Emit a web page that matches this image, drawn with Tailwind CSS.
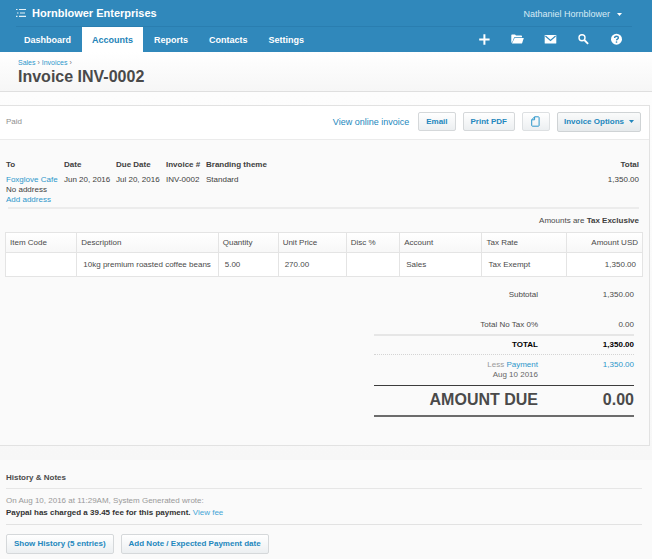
<!DOCTYPE html>
<html lang="en">
<head>
<meta charset="utf-8">
<meta name="viewport" content="width=device-width, initial-scale=1">
<title>Invoice INV-0002</title>
<script src="https://cdn.jsdelivr.net/npm/@tailwindcss/browser@4"></script>
</head>
<body class="min-h-screen bg-[#fafafa] font-['Liberation_Sans',Arial,sans-serif] text-[8px] leading-[10px] text-[#4a4a4a]">

<header class="bg-[#3088bb] text-white">
  <div class="ml-4 mr-5 flex h-[27px] items-center justify-between border-b border-[#2a7eb0]">
    <div class="flex items-center gap-[6px]">
      <svg class="h-[10px] w-[10px]" viewBox="0 0 10 10" fill="#e4f1f8" aria-hidden="true"><path d="M0 1h1.5v1.1H0zM3 1h7v1.1H3zM1 4.4h1.5v1.1H1zM4 4.4h5v1.1H4zM0 7.8h1.5v1.1H0zM3 7.8h7v1.1H3z"/></svg>
      <span class="text-[11px] leading-[14px] font-bold">Hornblower Enterprises</span>
    </div>
    <button type="button" class="mr-[10px] flex items-center gap-[7px] pt-[2px] text-[9px] leading-[12px] text-[#d9ebf5]">Nathaniel Hornblower
      <svg class="h-[3px] w-[5px]" viewBox="0 0 5 3" fill="#fff" aria-hidden="true"><path d="M0 0h5L2.5 3z"/></svg>
    </button>
  </div>
  <div class="flex h-[25px] items-stretch justify-between pl-[14px] pr-[29px]">
    <nav class="flex gap-px text-[9px] leading-[12px] font-bold">
      <a href="#" class="flex items-center px-[10px]">Dashboard</a>
      <a href="#" class="flex items-center bg-white px-[10px] text-[#2383b8]">Accounts</a>
      <a href="#" class="flex items-center px-[10px]">Reports</a>
      <a href="#" class="flex items-center px-[10px]">Contacts</a>
      <a href="#" class="flex items-center px-[10px]">Settings</a>
    </nav>
    <div class="flex items-center gap-[20px]">
      <button type="button" aria-label="New"><svg class="h-[13px] w-[13px]" viewBox="0 0 13 13" fill="#fff"><path d="M5.4 1.3h2v4.2h4.2v2H7.4v4.2h-2V7.5H1.2v-2h4.2z"/></svg></button>
      <button type="button" aria-label="Files"><svg class="h-[13px] w-[13px]" viewBox="0 0 13 13" fill="#fff"><path d="M.3 2.2q0-.7.7-.7h3l1 1h5.2q.8 0 .8.8v1H3.2L1.5 8.6.3 10z"/><path d="M3.6 5h9.2l-1.6 5q-.2.6-.9.6H.9z"/></svg></button>
      <button type="button" aria-label="Messages"><svg class="h-[13px] w-[13px]" viewBox="0 0 13 13"><rect x=".7" y="1.9" width="11.6" height="8.6" rx=".6" fill="#fff"/><path d="M1.4 3l5.1 4.4L11.6 3" fill="none" stroke="#3088bb" stroke-width="1.1"/></svg></button>
      <button type="button" aria-label="Search"><svg class="h-[13px] w-[13px]" viewBox="0 0 13 13" fill="none" stroke="#fff"><circle cx="5" cy="4.8" r="3" stroke-width="1.4"/><path d="M7.3 7l3.8 3.8" stroke-width="1.8"/></svg></button>
      <button type="button" aria-label="Help"><svg class="h-[13px] w-[13px]" viewBox="0 0 13 13"><circle cx="6.5" cy="6.2" r="5.5" fill="#fff"/><path d="M4.6 5q0-1.8 1.9-1.8T8.4 4.8q0 .8-.9 1.3t-1 1.3" fill="none" stroke="#3088bb" stroke-width="1.4"/><circle cx="6.5" cy="9" r=".85" fill="#3088bb"/></svg></button>
    </div>
  </div>
</header>

<div class="border-b border-[#dfdfdf] bg-linear-to-b from-white to-[#f6f6f6] px-[18px] pt-[6px] pb-[5px]">
  <nav class="text-[7px] leading-[9px] text-[#777]"><a href="#" class="text-[#2d97cb]">Sales</a> › <a href="#" class="text-[#2d97cb]">Invoices</a> ›</nav>
  <h1 class="text-[16px] leading-[19px] font-bold text-[#4a4a4a]">Invoice INV-0002</h1>
</div>

<main>
  <div class="bg-linear-to-b from-[#fdfdfd] to-[#f7f7f7] pt-[13px] pr-[2px] pb-[14px]">
    <section class="border-y border-r border-[#e2e2e2] bg-[#fafafa] pb-[28px]">
      <div class="flex h-[34px] items-center justify-between border-b border-[#ebebeb] bg-white pr-[8px] pb-[2px] pl-[6px]">
        <span class="text-[#8f8f8f]">Paid</span>
        <div class="flex items-center font-bold text-[#2387bd]">
          <a href="#" class="mr-[9px] text-[9px] font-normal">View online invoice</a>
          <button type="button" class="mr-[7px] h-[19px] rounded-[2px] border border-[#d5d8da] bg-linear-to-b from-white to-[#eceff1] px-[7px] font-bold">Email</button>
          <button type="button" class="mr-[7px] h-[19px] rounded-[2px] border border-[#d5d8da] bg-linear-to-b from-white to-[#eceff1] px-[7px] font-bold">Print PDF</button>
          <button type="button" aria-label="Copy" class="mr-[7px] flex h-[19px] w-[28px] items-center justify-center rounded-[2px] border border-[#dde0e2] bg-linear-to-b from-white to-[#eceff1]"><svg class="h-[11px] w-[9px]" viewBox="0 0 9 11" fill="none" stroke="#2d97cb" stroke-width="1"><path d="M3.6.8h3.8q.7 0 .7.7v8q0 .7-.7.7H1.4q-.7 0-.7-.7V3.8zM3.6.8v3H.8"/></svg></button>
          <button type="button" class="flex h-[20px] items-center gap-[5px] rounded-[2px] border border-[#cfd3d5] bg-linear-to-b from-[#fafbfb] to-[#e6eaec] px-[6px] font-bold">Invoice Options<svg class="h-[3px] w-[5px]" viewBox="0 0 5 3" fill="currentColor" aria-hidden="true"><path d="M0 0h5L2.5 3z"/></svg></button>
        </div>
      </div>

      <div class="pt-[20px] pr-[10px] pl-[6px]">
        <table class="w-full text-left align-top text-[#404040]">
          <thead>
            <tr>
              <th class="w-[58px]">To</th><th class="w-[52px]">Date</th><th class="w-[50px]">Due Date</th><th class="w-[40px]">Invoice #</th><th>Branding theme</th><th class="text-right">Total</th>
            </tr>
          </thead>
          <tbody>
            <tr class="align-top whitespace-nowrap">
              <td class="pt-[5px]"><a href="#" class="text-[#2d97cb]">Foxglove Cafe</a><br>No address<br><a href="#" class="text-[#2d97cb]">Add address</a></td>
              <td class="pt-[5px]">Jun 20, 2016</td><td class="pt-[5px]">Jul 20, 2016</td><td class="pt-[5px]">INV-0002</td><td class="pt-[5px]">Standard</td><td class="pt-[5px] text-right">1,350.00</td>
            </tr>
          </tbody>
        </table>
      </div>
      <div class="mt-[2px] mr-[10px] ml-[8px] border-t-2 border-[#ececec] pt-[7px] text-right">Amounts are <strong class="text-[#404040]">Tax Exclusive</strong></div>

      <div class="mt-[6px] pr-[6px] pl-[5px]">
        <table class="w-full table-fixed border-collapse border border-[#e0e0e0] text-left">
          <thead>
            <tr class="h-[20px] bg-linear-to-b from-white to-[#f7f7f7]">
              <th class="w-[11.2%] border border-[#e4e4e4] px-[4px] font-normal">Item Code</th>
              <th class="w-[22.2%] border border-[#e4e4e4] px-[4px] font-normal">Description</th>
              <th class="w-[9.4%] border border-[#e4e4e4] px-[4px] font-normal">Quantity</th>
              <th class="w-[10.7%] border border-[#e4e4e4] px-[4px] font-normal">Unit Price</th>
              <th class="w-[8.4%] border border-[#e4e4e4] px-[4px] font-normal">Disc %</th>
              <th class="w-[12.9%] border border-[#e4e4e4] px-[4px] font-normal">Account</th>
              <th class="w-[13.3%] border border-[#e4e4e4] px-[4px] font-normal">Tax Rate</th>
              <th class="border border-[#e4e4e4] px-[4px] text-right font-normal">Amount USD</th>
            </tr>
          </thead>
          <tbody>
            <tr class="h-[24px] bg-white whitespace-nowrap">
              <td class="border border-[#e4e4e4]"></td>
              <td class="border border-[#e4e4e4] px-[6px]">10kg premium roasted coffee beans</td>
              <td class="border border-[#e4e4e4] px-[6px]">5.00</td>
              <td class="border border-[#e4e4e4] px-[6px]">270.00</td>
              <td class="border border-[#e4e4e4]"></td>
              <td class="border border-[#e4e4e4] px-[6px]">Sales</td>
              <td class="border border-[#e4e4e4] px-[6px]">Tax Exempt</td>
              <td class="border border-[#e4e4e4] px-[6px] text-right">1,350.00</td>
            </tr>
          </tbody>
        </table>
      </div>

      <dl class="mt-[13px] mr-[15px] ml-auto w-[40%] min-w-[260px] text-right">
        <div class="flex justify-end"><dt>Subtotal</dt><dd class="w-[96px]">1,350.00</dd></div>
        <div class="mt-[20px] flex justify-end border-b-2 border-[#e6e6e6] pb-[4px]"><dt>Total No Tax 0%</dt><dd class="w-[96px]">0.00</dd></div>
        <div class="flex justify-end border-b border-dotted border-[#d4d4d4] py-[4px] font-bold text-black"><dt>TOTAL</dt><dd class="w-[96px]">1,350.00</dd></div>
        <div class="flex justify-end border-b border-[#3c3c3c] py-[5px]"><dt><span class="text-[#999]">Less</span> <a href="#" class="text-[#2d97cb]">Payment</a><br><span class="text-[#666]">Aug 10 2016</span></dt><dd class="w-[96px] text-[#2d97cb]">1,350.00</dd></div>
        <div class="flex justify-end border-b-2 border-[#6c6c6c] pt-[5px] pb-[6px] text-[16px] leading-[18px] font-bold"><dt>AMOUNT DUE</dt><dd class="w-[96px]">0.00</dd></div>
      </dl>
    </section>
  </div>

  <section class="pt-[13px] pr-[10px] pb-[5px] pl-[6px]">
    <h2 class="border-b border-[#e6e6e6] pb-[5px] font-bold">History &amp; Notes</h2>
    <div class="border-b border-[#e2e2e2] pt-[6px] pb-[5px] leading-[12px]">
      <p class="text-[#999]">On Aug 10, 2016 at 11:29AM, System Generated wrote:</p>
      <p><strong class="text-[#333]">Paypal has charged a 39.45 fee for this payment.</strong> <a href="#" class="text-[#45a5d6]">View fee</a></p>
    </div>
    <div class="mt-[9px] flex gap-[7px] text-[#2387bd]">
      <button type="button" class="h-[20px] rounded-[2px] border border-[#d5d8da] bg-linear-to-b from-white to-[#eceff1] px-[7px] font-bold">Show History (5 entries)</button>
      <button type="button" class="h-[20px] rounded-[2px] border border-[#d5d8da] bg-linear-to-b from-white to-[#eceff1] px-[7px] font-bold">Add Note / Expected Payment date</button>
    </div>
  </section>
</main>
</body>
</html>
